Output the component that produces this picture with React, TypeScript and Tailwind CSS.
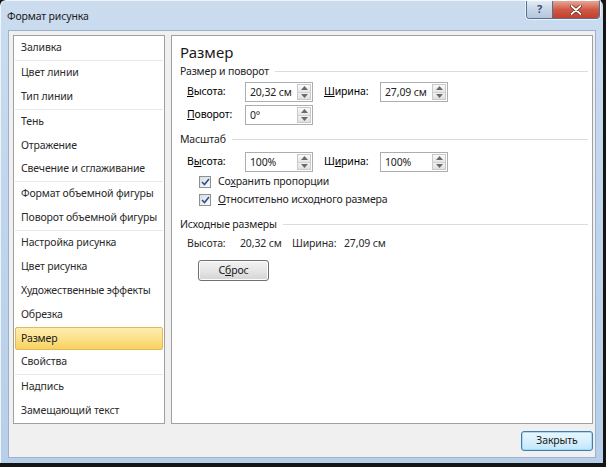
import React from "react";

const font = { fontFamily: '"Noto Sans", "Segoe UI", sans-serif' };

function Spin({ value, w = 68 }: { value: string; w?: number }) {
  return (
    <div className="flex h-[20px] border border-[#abadb3] bg-white" style={{ width: w }}>
      <div className="flex-1 pl-[4px] leading-[18px] text-[#222]">{value}</div>
      <div className="my-[1px] mr-[1px] flex w-[14px] flex-col border border-[#c9c9c9]">
        <div className="flex flex-1 items-center justify-center border-b border-[#d0d0d0] bg-gradient-to-b from-[#fafafa] to-[#e6e6e6]">
          <svg width="7" height="4" viewBox="0 0 7 4"><path d="M0 4 L3.5 0 L7 4 Z" fill="#6a6a6a" /></svg>
        </div>
        <div className="flex flex-1 items-center justify-center bg-gradient-to-b from-[#f2f2f2] to-[#e0e0e0]">
          <svg width="7" height="4" viewBox="0 0 7 4"><path d="M0 0 L3.5 4 L7 0 Z" fill="#6a6a6a" /></svg>
        </div>
      </div>
    </div>
  );
}

function GroupLabel({ text }: { text: string }) {
  return (
    <div className="flex h-[16px] items-center gap-[6px] pr-[4px]">
      <span className="leading-[16px] text-[#1e1e1e]">{text}</span>
      <div className="h-px flex-1 bg-[#dcdcdc]" />
    </div>
  );
}

function Check({ label }: { label: React.ReactNode }) {
  return (
    <div className="flex h-[18px] items-center pl-[19px]">
      <div className="flex h-[12px] w-[12px] items-center justify-center border border-[#8e8f8f] bg-gradient-to-br from-[#d8dde4] to-[#fbfbfb]">
        <svg width="9" height="8" viewBox="0 0 9 8">
          <path d="M1 4 L3.5 6.5 L8 1" stroke="#2d4f8a" strokeWidth="1.6" fill="none" />
        </svg>
      </div>
      <span className="ml-[7px] text-[#1e1e1e]">{label}</span>
    </div>
  );
}

const items: (string | null)[] = [
  "Заливка",
  null,
  "Цвет линии",
  "Тип линии",
  null,
  "Тень",
  "Отражение",
  "Свечение и сглаживание",
  null,
  "Формат объемной фигуры",
  "Поворот объемной фигуры",
  null,
  "Настройка рисунка",
  "Цвет рисунка",
  "Художественные эффекты",
  "Обрезка",
  "Размер",
  "Свойства",
  null,
  "Надпись",
  "Замещающий текст",
];

export default function App() {
  return (
    <div className="h-[467px] w-[606px] whitespace-nowrap bg-[#151515] text-[10.5px] tracking-[-0.15px]" style={font}>
      <div className="flex h-[463px] w-[603px] flex-col rounded-tl-[6px] rounded-tr-[6px] border-t border-l border-[#eef4fb] bg-gradient-to-b from-[#cbdcef] via-[#bfd5ec] to-[#b8cfe9]">
        {/* title bar */}
        <div className="flex h-[29px] items-start">
          <div className="pl-[6px] pt-[7px] text-[10.5px] leading-[16px] text-[#1a1a1a]">Формат рисунка</div>
          <div className="flex-1" />
          <div className="mr-[3px] flex h-[18px] overflow-hidden rounded-b-[4px] border border-t-0 border-[#5a6f8c] shadow-[0_0_0_1px_rgba(255,255,255,0.6)]">
            <div className="flex w-[26px] items-center justify-center border-r border-[#5a6f8c] bg-gradient-to-b from-[#e3ecf6] via-[#c7d6e8] to-[#b4c6de] text-[11px] font-bold text-[#3d4d66]">
              ?
            </div>
            <div className="flex w-[46px] items-center justify-center bg-gradient-to-b from-[#e8a595] via-[#cf5a46] to-[#c23f2c]">
              <svg width="12" height="10" viewBox="0 0 12 10">
                <path d="M1.5 1 L10.5 9 M10.5 1 L1.5 9" stroke="#5b1d14" strokeWidth="3.2" strokeLinecap="round" />
                <path d="M1.5 1 L10.5 9 M10.5 1 L1.5 9" stroke="#ffffff" strokeWidth="1.8" strokeLinecap="round" />
              </svg>
            </div>
          </div>
        </div>
        {/* client */}
        <div className="mx-[7px] mb-[5px] flex flex-1 flex-col border border-[#9db1cc] bg-[#f0f0f0]">
          <div className="flex gap-[6px] pl-[4px] pr-[2px] pt-[4px]">
            {/* left list */}
            <div className="flex h-[389px] w-[152px] flex-col border border-[#a0a0a0] bg-white">
              {items.map((it, i) =>
                it === null ? (
                  <div key={i} className="mx-[1px] h-px bg-[#e8e8e8]" />
                ) : it === "Размер" ? (
                  <div
                    key={i}
                    className="mx-[1px] flex h-[24px] items-center rounded-[2px] border border-[#e1bb5a] bg-gradient-to-b from-[#fdedb0] via-[#fce18a] to-[#f8d25e] pl-[5px] text-[#1a1a1a]"
                  >
                    {it}
                  </div>
                ) : (
                  <div key={i} className="flex h-[24px] items-center pl-[7px] text-[#2a2a2a]">
                    {it}
                  </div>
                )
              )}
            </div>
            {/* right panel */}
            <div className="flex h-[389px] flex-1 flex-col border border-[#a0a0a0] bg-white pl-[8px]">
              <div className="mt-[6px] h-[20px] text-[15px] leading-[20px] tracking-normal text-[#1a1a1a]">Размер</div>
              <div className="mt-[1px]">
                <GroupLabel text="Размер и поворот" />
              </div>
              <div className="mt-[3px] flex h-[20px] items-center pl-[7px]">
                <span className="w-[58px]"><u>В</u>ысота:</span>
                <Spin value="20,32 см" />
                <span className="ml-[11px] w-[56px]"><u>Ш</u>ирина:</span>
                <Spin value="27,09 см" />
              </div>
              <div className="mt-[3px] flex h-[20px] items-center pl-[7px]">
                <span className="w-[58px]"><u>П</u>оворот:</span>
                <Spin value="0°" />
              </div>
              <div className="mt-[6px]">
                <GroupLabel text="Масштаб" />
              </div>
              <div className="mt-[5px] flex h-[20px] items-center pl-[7px]">
                <span className="w-[58px]">В<u>ы</u>сота:</span>
                <Spin value="100%" />
                <span className="ml-[11px] w-[56px]">Ш<u>и</u>рина:</span>
                <Spin value="100%" />
              </div>
              <div className="mt-[1px]">
                <Check label={<>Со<u>х</u>ранить пропорции</>} />
              </div>
              <Check label={<><u>О</u>тносительно исходного размера</>} />
              <div className="mt-[7px]">
                <GroupLabel text="Исходные размеры" />
              </div>
              <div className="mt-[4px] flex h-[16px] items-center pl-[7px] text-[#2a2a2a]">
                <span className="w-[53px]">Высота:</span>
                <span className="w-[52px]">20,32 см</span>
                <span className="w-[52px]">Ширина:</span>
                <span>27,09 см</span>
              </div>
              <div className="mt-[8px] pl-[18px]">
                <div className="flex h-[21px] w-[71px] items-center justify-center rounded-[3px] border border-[#707070] bg-gradient-to-b from-[#f2f2f2] via-[#e6e6e6] to-[#d4d4d4] text-[#1a1a1a] shadow-[inset_0_0_0_1px_#fcfcfc]">
                  С<u>б</u>рос
                </div>
              </div>
            </div>
          </div>
          <div className="flex flex-1 items-center justify-end pr-[2px]">
            <div className="flex h-[20px] w-[72px] items-center justify-center rounded-[3px] border border-[#3c7fb1] bg-gradient-to-b from-[#eaf6fd] via-[#d9f0fc] to-[#bee6fd] text-[#1a1a1a] shadow-[inset_0_0_0_1px_#a7d9f5]">
              Закрыть
            </div>
          </div>
        </div>
      </div>
    </div>
  );
}
